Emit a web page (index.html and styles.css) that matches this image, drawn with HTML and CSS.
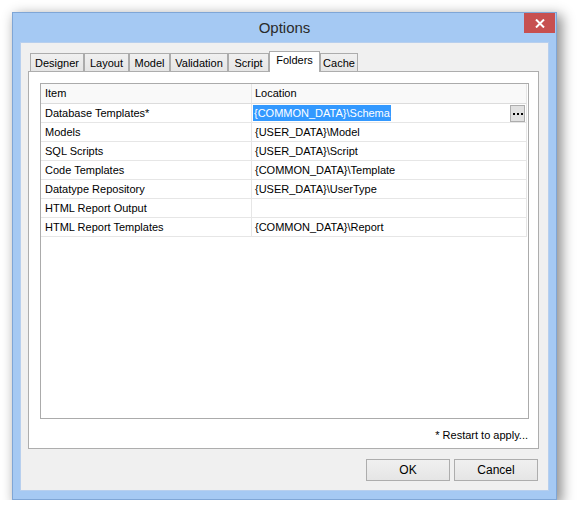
FILE: index.html
```html
<!DOCTYPE html>
<html>
<head>
<meta charset="utf-8">
<link rel="stylesheet" href="styles.css">
</head>
<body>
<div class="window">
  <div class="titlebar">
    <span></span>
    <span class="title">Options</span>
    <button class="close" aria-label="Close">
      <svg width="10" height="9" viewBox="0 0 10 9"><path d="M1 0.5 L9 8.5 M9 0.5 L1 8.5" stroke="#fff" stroke-width="2" fill="none"/></svg>
    </button>
  </div>
  <div class="client">
    <div class="tabs">
      <div class="tab w54">Designer</div>
      <div class="tab w45">Layout</div>
      <div class="tab w41">Model</div>
      <div class="tab w58">Validation</div>
      <div class="tab w41">Script</div>
      <div class="tab w51 active">Folders</div>
      <div class="tab w38">Cache</div>
    </div>
    <div class="panel">
      <div class="grid">
        <table>
          <colgroup><col class="c1"><col class="c2"></colgroup>
          <thead>
            <tr><th>Item</th><th>Location</th></tr>
          </thead>
          <tbody>
            <tr><td>Database Templates*</td><td><div class="edit"><span class="sel">{COMMON_DATA}\Schema</span><span class="dots"><svg width="13" height="15" viewBox="0 0 13 15"><rect x="2" y="7" width="2" height="2" fill="#000"/><rect x="6" y="7" width="2" height="2" fill="#000"/><rect x="10" y="7" width="2" height="2" fill="#000"/></svg></span></div></td></tr>
            <tr><td>Models</td><td>{USER_DATA}\Model</td></tr>
            <tr><td>SQL Scripts</td><td>{USER_DATA}\Script</td></tr>
            <tr><td>Code Templates</td><td>{COMMON_DATA}\Template</td></tr>
            <tr><td>Datatype Repository</td><td>{USER_DATA}\UserType</td></tr>
            <tr><td>HTML Report Output</td><td></td></tr>
            <tr><td>HTML Report Templates</td><td>{COMMON_DATA}\Report</td></tr>
          </tbody>
        </table>
      </div>
      <div class="note">* Restart to apply...</div>
    </div>
    <div class="buttons">
      <button class="btn">OK</button>
      <button class="btn">Cancel</button>
    </div>
  </div>
</div>
</body>
</html>
```
FILE: styles.css
```css
* { box-sizing: border-box; }
html, body { margin: 0; padding: 0; background: #ffffff; }
body {
  font-family: "Liberation Sans", Arial, sans-serif;
  font-size: 11px;
  color: #000;
}
.window {
  margin: 12px 0 0 12px;
  width: 545px;
  height: 488px;
  border: 1px solid #7fa6d6;
  background: #a5c9f3;
  padding: 0 7px 8px 7px;
  box-shadow: 4px 4px 12px 1px rgba(0,0,0,0.45);
  display: flex;
  flex-direction: column;
}
.titlebar {
  height: 29px;
  display: grid;
  grid-template-columns: 1fr auto 1fr;
  align-items: start;
}
.title {
  font-size: 15px;
  color: #2b2b2b;
  line-height: 30px;
}
.close {
  justify-self: end;
  margin-right: -6px;
  width: 31px;
  height: 20px;
  border: 0;
  padding: 0;
  background: #c75050;
  display: flex;
  align-items: center;
  justify-content: center;
}
.client {
  height: 449px;
  border: 1px solid #b7cfee;
  background: #f0f0f0;
  padding: 8px 0 0 7px;
  display: flex;
  flex-direction: column;
}
.tabs {
  display: flex;
  align-items: flex-end;
  height: 20px;
  padding-left: 2px;
}
.tab {
  height: 18px;
  border: 1px solid #acacac;
  border-bottom: 0;
  background: linear-gradient(#f0f0f0, #e5e5e5);
  text-align: center;
  line-height: 18px;
  color: #000;
}
.tab.active {
  position: relative;
  z-index: 1;
  height: 21px;
  margin-bottom: -1px;
  background: #ffffff;
  line-height: 17px;
}
.w54 { width: 54px; }
.w45 { width: 45px; }
.w41 { width: 41px; }
.w58 { width: 58px; }
.w51 { width: 51px; }
.w38 { width: 38px; }
.panel {
  width: 511px;
  height: 378px;
  border: 1px solid #adadad;
  background: #ffffff;
  padding: 11px 0 0 11px;
  display: flex;
  flex-direction: column;
}
.grid {
  width: 489px;
  height: 336px;
  border: 1px solid #ababab;
  background: #fff;
}
.grid table {
  border-collapse: separate;
  border-spacing: 0;
  table-layout: fixed;
  width: 486px;
}
.c1 { width: 211px; }
.c2 { width: 275px; }
.grid th, .grid td {
  height: 19px;
  padding: 0 0 0 4px;
  text-align: left;
  font-weight: normal;
  border-bottom: 1px solid #e6e6e6;
  border-right: 1px solid #e6e6e6;
  white-space: nowrap;
  line-height: 17px;
  vertical-align: middle;
}
.grid th {
  height: 20px;
  background: #f9f9f9;
  border-bottom: 1px solid #dcdcdc;
}
.grid td + td, .grid th + th { padding-left: 3px; }
.edit {
  display: flex;
  justify-content: space-between;
  align-items: center;
  padding-right: 1px;
}
.sel {
  background: #3399ff;
  color: #fff;
  padding: 0 1px;
  margin-left: -2px;
  line-height: 16px;
}
.dots {
  width: 15px;
  height: 17px;
  border: 1px solid #adadad;
  background: #e1e1e1;
  display: flex;
}
.note {
  align-self: flex-end;
  margin: 9px 10px 0 0;
  line-height: 14px;
  color: #000;
}
.buttons {
  display: flex;
  justify-content: flex-end;
  gap: 4px;
  margin: 10px 10px 0 0;
}
.btn {
  width: 84px;
  height: 22px;
  border: 1px solid #adadad;
  background: linear-gradient(#f0f0f0, #e5e5e5);
  font-family: inherit;
  font-size: 12px;
  color: #000;
  padding: 0;
}
```
